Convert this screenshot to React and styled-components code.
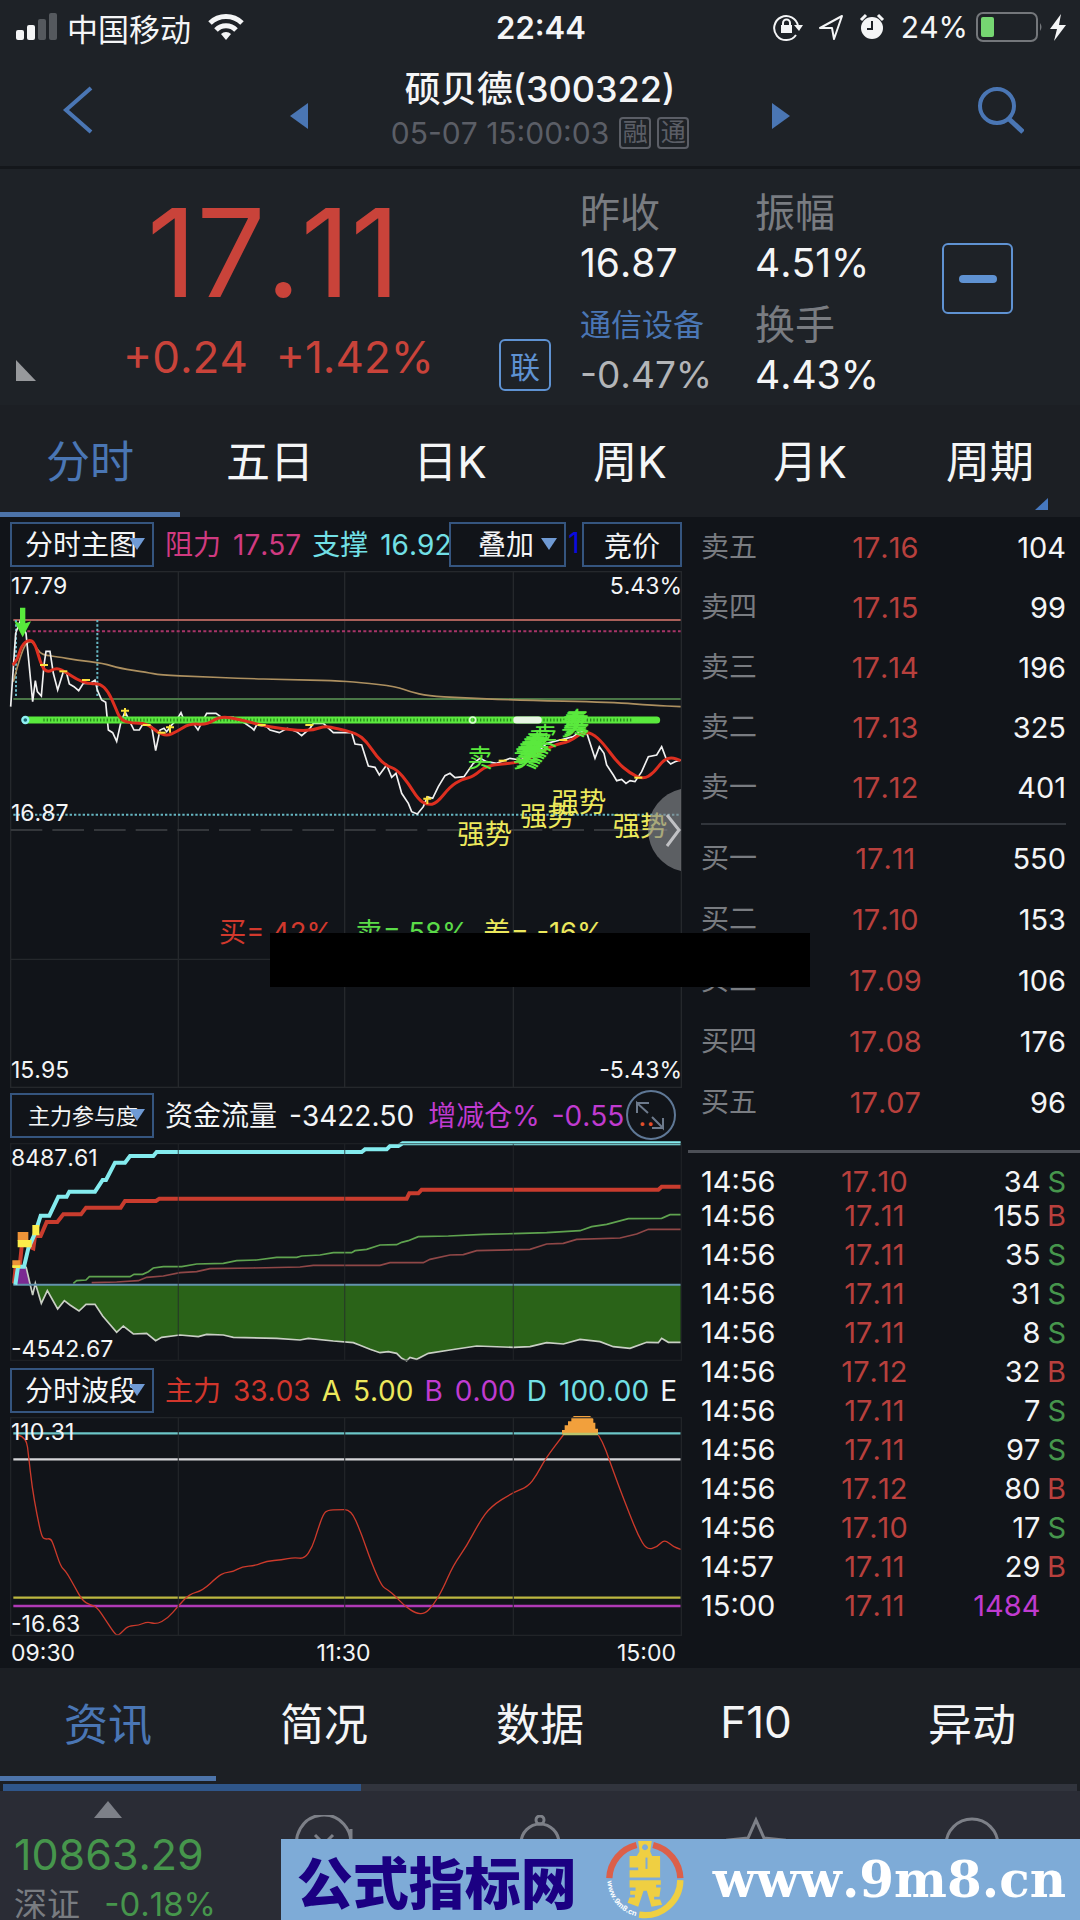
import React from 'react';
import styled, { createGlobalStyle, css } from 'styled-components';

const C_PAGE = '#111419';
const C_BAR = '#1e2227';
const C_TABS = '#1c1f24';
const C_FOOTER = '#2a2c35';
const C_WHITE = '#f4f5f6';
const C_GREY = '#797c81';
const C_BLUE = '#4a76b4';
const C_LIGHT_BLUE = '#5f92d2';
const C_RED = '#c9433a';
const C_DEEP_RED = '#b8403d';
const C_GREEN = '#46964c';
const C_MAGENTA = '#c03bd0';
const C_CYAN = '#72e0e6';
const C_YELLOW = '#ece85c';
const C_GRID = '#25282c';

const GlobalStyle = createGlobalStyle`
  * {
    box-sizing: border-box;
  }

  body {
    margin: 0;
    background: ${C_PAGE};
    color: ${C_WHITE};
    font-family: Inter, "Noto Sans CJK SC", sans-serif;
    font-kerning: none;
  }

  button,
  select {
    margin: 0;
    padding: 0;
    border: 0;
    background: none;
    color: inherit;
    font: inherit;
  }

  svg {
    display: block;
  }
`;

const Page = styled.div`
  min-height: 100vh;
  overflow: hidden;
`;

/* Status bar */

const StatusBar = styled.div`
  display: grid;
  grid-template-columns: 1fr auto 1fr;
  align-items: center;
  height: 54px;
  padding: 0 14px 0 16px;
  background: ${C_BAR};
  font-size: 30px;
`;

const StatusGroup = styled.div`
  display: flex;
  align-items: center;
  justify-content: ${({ end }) => (end ? 'flex-end' : 'flex-start')};
  gap: ${({ gap }) => gap}px;
`;

const Carrier = styled.span`
  font-size: 31px;
`;

const Clock = styled.time`
  font-size: 31px;
  font-weight: 600;
`;

/* Header */

const Header = styled.header`
  display: grid;
  grid-template-columns: 1fr auto 1fr;
  height: 115px;
  padding: 0 56px;
  background: ${C_BAR};
  border-bottom: 3px solid #14171b;
`;

const HeaderSide = styled.div`
  display: flex;
  justify-content: space-between;
  padding-top: 32px;
`;

const IconButton = styled.button`
  display: flex;
  align-items: ${({ low }) => (low ? 'center' : 'flex-start')};
  height: 60px;
  color: ${C_BLUE};
`;

const Heading = styled.div`
  display: flex;
  flex-direction: column;
  align-items: center;
  width: 464px;
  padding-top: 12px;
`;

const Name = styled.h1`
  margin: 0;
  font-size: 36px;
  font-weight: 500;
  line-height: 46px;
`;

const Stamp = styled.div`
  display: flex;
  align-items: center;
  gap: 6px;
  color: #5b5e66;
  font-size: 30px;
  line-height: 42px;
`;

const Tag = styled.span`
  width: 32px;
  height: 32px;
  border: 2px solid currentColor;
  border-radius: 4px;
  font-size: 25px;
  line-height: 27px;
  text-align: center;
  &:first-of-type {
    margin-left: 4px;
  }
`;

/* Quote */

const Quote = styled.section`
  display: grid;
  grid-template-columns: 499fr 81fr 175fr 187fr 138fr;
  height: 236px;
  background: ${C_BAR};
`;

const PriceBlock = styled.div`
  position: relative;
  display: flex;
  flex-direction: column;
  align-items: center;
  padding: 24px 0 0 58px;
  color: ${C_RED};
`;

const Price = styled.strong`
  font-size: 122px;
  font-weight: 400;
  line-height: 120px;
  padding-right: 10px;
`;

const Change = styled.div`
  display: flex;
  gap: 28px;
  font-size: 44px;
  line-height: 88px;
`;

const Corner = styled.svg`
  position: absolute;
  left: 16px;
  bottom: 24px;
`;

const BoxButton = styled.button`
  display: flex;
  align-items: center;
  justify-content: center;
  width: ${({ size }) => size}px;
  height: ${({ size }) => size}px;
  margin-top: ${({ top }) => top}px;
  border: 2px solid ${C_LIGHT_BLUE};
  border-radius: 6px;
  color: ${C_LIGHT_BLUE};
  font-size: 30px;
`;

const Figures = styled.dl`
  display: grid;
  grid-template-rows: 50px 50px 62px 50px;
  align-items: end;
  align-content: start;
  margin: 0;
  padding-top: 19px;
  line-height: 50px;
  white-space: nowrap;
`;

const Term = styled.dt`
  color: ${({ link }) => (link ? C_BLUE : C_GREY)};
  font-size: ${({ link }) => (link ? 31 : 40)}px;
`;

const Figure = styled.dd`
  margin: 0;
  color: ${({ muted }) => (muted ? '#b3b5b8' : C_WHITE)};
  font-size: ${({ muted }) => (muted ? 37 : 39)}px;
`;

/* Tabs */

const Tabs = styled.nav`
  display: flex;
  height: ${({ tall }) => (tall ? 113 : 112)}px;
  background: ${C_TABS};
`;

const Tab = styled.button`
  position: relative;
  flex: 1;
  border-bottom: 5px solid ${({ active }) => (active ? '#4d74aa' : 'transparent')};
  color: ${({ active }) => (active ? C_BLUE : C_WHITE)};
  font-size: 44px;
`;

const TabCorner = styled.svg`
  position: absolute;
  right: 32px;
  bottom: 2px;
`;

/* Market: charts on the left, order book on the right */

const Market = styled.main`
  position: relative;
  display: grid;
  grid-template-columns: 344fr 196fr;
  background: ${C_PAGE};
`;

const Charts = styled.div`
  min-width: 0;
  padding: 5px 6px 0 10px;
`;

const Toolbar = styled.div`
  position: relative;
  display: flex;
  align-items: stretch;
  height: 45px;
  margin-bottom: ${({ gap }) => gap}px;
  font-size: 28px;
`;

const toolBox = css`
  flex: none;
  border: 2px solid #35557f;
  background: ${C_PAGE};
`;

const Picker = styled.div`
  ${toolBox}
  position: relative;
  width: ${({ width }) => width}px;
`;

const PickerSelect = styled.select`
  width: 100%;
  height: 100%;
  padding-left: ${({ indent }) => indent}px;
  appearance: none;
  outline: none;
  font-size: ${({ small }) => (small ? 22 : 28)}px;
  white-space: nowrap;
`;

const Caret = styled.svg`
  position: absolute;
  top: 14px;
  right: 7px;
  pointer-events: none;
`;

const ToolButton = styled.button`
  ${toolBox}
  width: 100px;
`;

const Legend = styled.div`
  display: flex;
  flex: 1;
  align-items: center;
  gap: ${({ tight }) => (tight ? 11 : 14)}px;
  min-width: 0;
  overflow: hidden;
  padding-left: 11px;
  line-height: 42px;
  white-space: nowrap;
`;

const Entry = styled.span`
  display: flex;
  flex: none;
  align-items: baseline;
  gap: 12px;
  color: ${({ color }) => color};
`;

const Peek = styled.span`
  flex: none;
  width: 16px;
  color: #0a0ae0;
  line-height: 42px;
  text-align: center;
`;

const ExpandButton = styled.button`
  position: absolute;
  top: -3px;
  right: 6px;
`;

const Plot = styled.div`
  position: relative;
  margin-bottom: ${({ gap }) => gap || 0}px;

  > svg {
    width: 100%;
    height: auto;
    overflow: visible;
  }
`;

const Scale = styled.span`
  position: absolute;
  font-size: 23px;
  line-height: 30px;
  ${({ bottom }) => (bottom === undefined ? 'top: 0;' : `bottom: ${bottom}px;`)}
  ${({ right }) => (right ? 'right: 0;' : 'left: 1px;')}
`;

const MidScale = styled(Scale)`
  top: 44%;
`;

const NextButton = styled.button`
  position: absolute;
  top: 42%;
  right: 1px;
`;

const TimeAxis = styled.div`
  display: grid;
  grid-template-columns: 1fr auto 1fr;
  padding: 2px 6px 0 1px;
  font-size: 23px;
  line-height: 30px;
  span:last-child {
    text-align: right;
  }
`;

const Cover = styled.div`
  position: absolute;
  top: 416px;
  left: 25%;
  width: 50%;
  height: 54px;
  background: #000;
`;

const Book = styled.div`
  min-width: 0;
`;

const Side = styled.div`
  margin: 0 14px 0 13px;

  & + & {
    margin-top: 6px;
    padding-top: 3px;
    border-top: 2px solid #31353b;
  }
`;

const Levels = styled.table`
  width: calc(100% - ${({ inset }) => inset || 0}px);
  margin-left: ${({ inset }) => (inset ? 13 : 0)}px;
  border-collapse: collapse;
  table-layout: fixed;
  font-size: 29px;
  line-height: 29px;
`;

const Row = styled.tr`
  height: ${({ size }) => size}px;
`;

const Cell = styled.td`
  width: ${({ width }) => width};
  padding: 0;
  color: ${({ color }) => color || C_WHITE};
  text-align: ${({ align }) => align || 'left'};
`;

const Label = styled.th`
  width: 30%;
  padding: 0;
  color: ${C_GREY};
  font-size: 28px;
  font-weight: 400;
  text-align: left;
`;

const Trades = styled.div`
  margin-top: 17px;
  padding-top: 14px;
  border-top: 3px solid #4c4f56;
`;

/* Footer */

const Progress = styled.div`
  height: 10px;
  padding: 3px 3px 0;
  background: ${C_TABS};
`;

const ProgressTrack = styled.div`
  height: 7px;
  background: #31343d;

  &::before {
    content: '';
    display: block;
    width: calc(100% / 3);
    height: 7px;
    background: #2f568a;
  }
`;

const Footer = styled.footer`
  position: relative;
  display: grid;
  grid-template-columns: repeat(5, 1fr);
  height: 129px;
  overflow: hidden;
  background: ${C_FOOTER};
  color: #7d8088;
`;

const Index = styled.a`
  display: flex;
  flex-direction: column;
  padding: 10px 0 0 14px;
  color: ${C_GREEN};
  font-size: 43px;
  line-height: 72px;
  text-decoration: none;
  white-space: nowrap;

  svg {
    align-self: center;
    margin-right: 14px;
  }
`;

const IndexNote = styled.span`
  display: flex;
  justify-content: space-between;
  font-size: 33px;
  line-height: 28px;
`;

const Exchange = styled.span`
  color: ${C_GREY};
`;

const FooterButton = styled.button`
  display: flex;
  justify-content: center;
  padding-top: 24px;
`;

const Banner = styled.a`
  position: absolute;
  right: 0;
  bottom: 0;
  left: 26%;
  display: flex;
  align-items: center;
  justify-content: space-between;
  height: 81px;
  padding: 0 14px 0 16px;
  background: #7eabd7;
  color: #fff;
  text-decoration: none;
`;

const BannerName = styled.b`
  color: #1b0082;
  font-family: 'Noto Sans CJK SC', sans-serif;
  font-size: 56px;
  font-weight: 900;
  line-height: 72px;
`;

const BannerSite = styled.b`
  font-family: 'DejaVu Serif', serif;
  font-size: 50px;
  line-height: 68px;
`;

const PERIODS = ['分时', '五日', '日K', '周K', '月K', '周期'];
const SECTIONS = ['资讯', '简况', '数据', 'F10', '异动'];

const ASKS = [
  ['卖五', '17.16', 104],
  ['卖四', '17.15', 99],
  ['卖三', '17.14', 196],
  ['卖二', '17.13', 325],
  ['卖一', '17.12', 401],
];

const BIDS = [
  ['买一', '17.11', 550],
  ['买二', '17.10', 153],
  ['买三', '17.09', 106],
  ['买四', '17.08', 176],
  ['买五', '17.07', 96],
];

const TRADES = [
  ['14:56', '17.10', 34, 'S'],
  ['14:56', '17.11', 155, 'B'],
  ['14:56', '17.11', 35, 'S'],
  ['14:56', '17.11', 31, 'S'],
  ['14:56', '17.11', 8, 'S'],
  ['14:56', '17.12', 32, 'B'],
  ['14:56', '17.11', 7, 'S'],
  ['14:56', '17.11', 97, 'S'],
  ['14:56', '17.12', 80, 'B'],
  ['14:56', '17.10', 17, 'S'],
  ['14:57', '17.11', 29, 'B'],
  ['15:00', '17.11', 1484, ''],
];

const PRICE_LINE =
  '32,590 47,370 60,335 78,370 85,440 98,575 106,512 112,545 124,558 132,465 138,424 150,424 160,490 173,540 190,485 200,490 208,522 222,530 236,542 250,520 270,520 285,510 292,540 305,570 317,577 325,660 338,668 350,694 362,640 375,605 392,640 402,660 418,660 430,640 455,650 467,722 480,660 492,655 500,665 515,645 530,630 543,608 552,630 580,640 594,660 620,610 648,610 665,622 700,622 735,640 757,655 762,660 770,645 800,650 810,660 838,668 862,655 890,665 905,677 930,655 940,640 970,640 1000,668 1055,668 1065,702 1085,705 1105,768 1125,772 1138,795 1160,765 1175,802 1188,790 1205,850 1225,880 1235,905 1252,912 1270,890 1282,860 1298,865 1315,830 1335,797 1350,790 1365,803 1392,800 1420,760 1440,745 1460,755 1490,760 1530,745 1560,750 1610,730 1640,700 1680,690 1720,680 1745,660 1760,668 1785,745 1798,710 1812,730 1820,765 1840,795 1850,812 1865,808 1878,820 1890,812 1905,815 1925,785 1945,740 1970,735 1985,710 2000,750 2012,762 2025,755 2042,750';

const MEAN_LINE =
  '38,465 50,455 65,405 88,388 105,400 125,470 143,488 170,472 200,488 230,508 265,522 300,520 325,545 345,590 362,630 395,640 440,640 470,665 500,678 530,665 570,640 620,645 660,618 720,628 780,645 840,655 900,662 940,660 975,648 1010,655 1070,670 1100,695 1130,740 1160,768 1190,778 1225,820 1255,868 1282,885 1310,880 1350,830 1385,808 1420,800 1460,765 1540,760 1580,750 1660,705 1710,695 1745,668 1775,668 1810,700 1850,755 1890,790 1930,808 1960,790 1990,750 2015,742 2042,752';

const AVERAGE_LINE =
  '40,515 65,420 88,390 105,405 120,430 140,436 170,440 230,450 310,460 360,475 440,487 480,495 600,500 720,505 860,509 1000,512 1080,517 1190,530 1230,545 1285,558 1380,563 1540,570 1840,577 1960,586 2042,590';

const FLOW_LINE =
  '78,440 98,525 106,490 124,550 142,512 173,567 193,542 210,555 237,573 258,553 285,553 308,588 350,637 370,618 400,642 440,640 467,662 485,652 540,645 595,650 620,643 670,645 700,652 830,655 900,660 925,655 1000,663 1060,668 1080,676 1110,688 1140,698 1165,695 1190,700 1205,715 1220,722 1230,712 1250,718 1285,700 1350,690 1430,678 1540,682 1590,680 1640,668 1690,672 1740,658 1800,665 1840,680 1890,685 1940,667 1975,668 1985,655 2005,667 2042,667';

const WAVE_LEFT =
  '55,225 79,232 86,290 96,380 111,465 125,530 135,538 152,535 161,555 182,620 198,634 224,680 247,722 271,735 290,740 317,780 343,820 354,827 370,812 385,798 416,796 442,785 469,793 502,776 535,738 568,702 607,692 653,650 673,638 700,635 726,620 766,617 799,603 845,600 882,592 913,597 937,562 953,510 970,462 983,450 1016,449 1053,449 1082,515 1115,610 1146,680 1162,688 1188,710 1214,738 1247,760 1274,762 1300,735 1327,690 1360,615 1399,560 1439,485 1472,440 1538,398 1584,380 1610,345 1637,295 1690,225';

const WAVE_RIGHT =
  '1795,225 1808,245 1828,300 1855,375 1888,460 1914,525 1940,570 1973,560 1993,538 2020,560 2042,568';

const TICKS = [
  [132, 465], [190, 484], [258, 510], [440, 645], [485, 668],
  [785, 645], [928, 645], [1508, 752], [1690, 690], [1915, 803],
];
const CROSSES = [[375, 602], [510, 652], [1282, 866]];

const SELLS = [
  [1440, 770], [1576, 770], [1582, 764], [1588, 757], [1594, 750], [1600, 742],
  [1606, 734], [1612, 726], [1620, 716], [1635, 706], [1720, 674], [1725, 668],
  [1732, 660], [1729, 664],
];

const STRONG = [[1372, 1001], [1560, 948], [1655, 907], [1838, 978]];

// Rounds a polyline by running quadratic curves through the midpoints
const smooth = points => {
  const list = points.split(' ').map(pair => pair.split(',').map(Number));
  const [first] = list;
  const last = list[list.length - 1];
  const curves = list.slice(1, -1).map(([x, y], i) => {
    const [nextX, nextY] = list[i + 2];
    return `Q${x} ${y} ${(x + nextX) / 2} ${(y + nextY) / 2}`;
  });
  return `M${first.join(' ')}${curves.join('')}L${last.join(' ')}`;
};

// Plots are drawn at three units to the pixel
const Grid = ({ top, bottom, opacity = 1 }) => (
  <g stroke={C_GRID} strokeWidth="4" fill="none" opacity={opacity}>
    <rect x="32" y={top + 2} width="2012" height={bottom - top - 4} />
    <path d={`M535 ${top}V${bottom}M1034 ${top}V${bottom}M1540 ${top}V${bottom}`} />
  </g>
);

const PricePlot = () => (
  <svg viewBox="30 183 2016 1551" fill="none">
    <Grid top={183} bottom={1734} />
    <path d="M32 1348H2044" stroke={C_GRID} strokeWidth="4" />
    <path d="M32 960H2044" stroke="#34373b" strokeWidth="6" strokeDasharray="95 30" />
    <path d="M40 330H2042" stroke="#a9605a" strokeWidth="6" />
    <path d="M66 364H2042" stroke="#a83468" strokeWidth="6" strokeDasharray="9 7" />
    <path d="M40 914H2042" stroke="#66b6c2" strokeWidth="6" strokeDasharray="7 6" />
    <path d="M48 330V567M292 330V567" stroke="#66b6c2" strokeWidth="6" strokeDasharray="7 6" />
    <path d="M40 567H2042" stroke="#4a7747" strokeWidth="6" />
    <path d={smooth(AVERAGE_LINE)} stroke="#ad9060" strokeWidth="5" />
    <polyline points={PRICE_LINE} stroke="#f1f1f1" strokeWidth="5" />
    <path d="M78 630H1970" stroke="#5ae93d" strokeWidth="21" strokeLinecap="round" />
    <path d="M130 630H1900" stroke="#2c8a20" strokeWidth="9" strokeDasharray="4 6" />
    <path d="M1550 630H1615" stroke="#e8f5e4" strokeWidth="21" strokeLinecap="round" />
    <circle cx="1418" cy="630" r="9" stroke="#d9ffd2" strokeWidth="5" />
    <circle cx="76" cy="630" r="9" fill="#1c6a74" stroke="#8ff0f2" strokeWidth="7" />
    <path d={smooth(MEAN_LINE)} stroke="#de2f20" strokeWidth="9" />
    <g stroke="#fbe23c" strokeWidth="6">
      {TICKS.map(([x, y]) => (
        <path key={x} d={`M${x - 12} ${y}h24`} />
      ))}
      {CROSSES.map(([x, y]) => (
        <path key={x} d={`M${x - 12} ${y}h24M${x} ${y - 8}v24`} />
      ))}
    </g>
    <path d="M60 293H76V340L93 334L68 382L43 334L60 340Z" fill="#58ea3c" />
    <g fill="#5ae93d" fontSize="75" textAnchor="middle">
      {SELLS.map(([x, y]) => (
        <text key={x} x={x} y={y}>卖</text>
      ))}
    </g>
    <g fill={C_YELLOW} fontSize="82">
      {STRONG.map(([x, y]) => (
        <text key={x} x={x} y={y}>强势</text>
      ))}
    </g>
    <g fontSize="82">
      <text x="657" y="1297" fill="#d2392d">买= 42%</text>
      <text x="1066" y="1297" fill="#5bdc48">卖= 58%</text>
      <text x="1450" y="1297" fill={C_YELLOW}>差= -16%</text>
    </g>
  </svg>
);

const FlowPlot = () => (
  <svg viewBox="30 69 2016 654" fill="none">
    <path d={`M100 494L${FLOW_LINE.split(' ').slice(2).join('L')}V494Z`} fill="#2a6318" />
    <path d="M48 494L58 440H76L92 494Z" fill="#7b2a92" />
    <polyline points={FLOW_LINE} stroke="#c9cfc4" strokeWidth="5" />
    <path d="M40 494H2042" stroke="#6393ad" strokeWidth="6" />
    <polyline
      points="220,490 230,482 258,480 268,470 390,470 402,463 428,463 445,455 460,444 490,440 545,440 590,432 670,430 710,422 770,420 830,412 890,412 905,408 960,405 1000,398 1055,398 1065,392 1100,388 1140,375 1190,374 1205,367 1225,362 1255,350 1345,348 1450,343 1540,341 1640,338 1740,332 1775,320 1820,313 1885,296 1985,295 2010,284 2042,284"
      stroke="#5fa34f"
      strokeWidth="5"
    />
    <polyline
      points="275,488 350,486 415,482 440,472 490,468 540,458 590,455 630,446 760,444 900,441 940,436 1140,436 1170,428 1270,428 1290,418 1350,405 1390,404 1430,392 1590,388 1640,372 1690,370 1730,358 1860,354 1910,342 1945,328 2042,328"
      stroke="#8f4747"
      strokeWidth="5"
    />
    <polyline
      points="42,490 48,430 60,430 66,370 100,385 105,348 122,348 140,306 172,306 190,283 243,283 258,263 362,263 375,243 468,243 478,236 1220,236 1228,220 1255,220 1265,209 1975,209 1985,200 2042,200"
      stroke="#c93c2e"
      strokeWidth="12"
    />
    <polyline
      points="46,494 54,440 72,440 85,385 105,340 122,287 148,287 175,230 200,230 208,215 285,215 308,180 318,180 345,128 375,128 390,108 460,108 470,96 1085,96 1095,88 1160,88 1170,78 1195,78 1208,70 2042,70"
      stroke="#84ebee"
      strokeWidth="12"
    />
    <path d="M53 336h32v26h-32zM37 421h24v20h-24z" fill="#ee9438" />
    <path d="M53 360h42v22h-42zM37 436h24v8h-24zM97 315h21v31h-21z" fill="#fbec4a" />
    <Grid top={69} bottom={723} opacity={0.6} />
  </svg>
);

const WavePlot = () => (
  <svg viewBox="30 171 2016 657" fill="none">
    <path d="M40 220H2042" stroke="#6cc6c8" strokeWidth="7" />
    <path d="M40 298H2042" stroke="#d5d5d8" strokeWidth="7" />
    <path d="M40 713H2042" stroke="#bdb840" strokeWidth="7" />
    <path d="M40 738H2042" stroke="#b03ab6" strokeWidth="8" />
    <path d={smooth(WAVE_LEFT)} stroke="#cc3a2b" strokeWidth="4" />
    <path d={smooth(WAVE_RIGHT)} stroke="#cc3a2b" strokeWidth="4" />
    <path d="M1686 222V210H1694V196H1704V184H1714V174L1722 168H1770L1780 176V188H1786V206H1794V222Z" fill="#f2a03c" />
    <path d="M1688 222H1794" stroke="#b9c46c" strokeWidth="8" />
    <Grid top={171} bottom={828} opacity={0.8} />
  </svg>
);

const Dropdown = ({ label, width, indent, small }) => (
  <Picker width={width}>
    <PickerSelect aria-label={label} indent={indent} small={small} defaultValue={label}>
      <option>{label}</option>
    </PickerSelect>
    <Caret width="16" height="12" viewBox="0 0 16 12">
      <path d="M0 0h16l-8 12z" fill="#6f9ad4" />
    </Caret>
  </Picker>
);

const BookSide = ({ rows, size }) => (
  <Side>
    <Levels>
      <tbody>
        {rows.map(([label, price, volume]) => (
          <Row key={label} size={size}>
            <Label scope="row">{label}</Label>
            <Cell width="41%" align="center" color={C_DEEP_RED}>{price}</Cell>
            <Cell align="right">{volume}</Cell>
          </Row>
        ))}
      </tbody>
    </Levels>
  </Side>
);

const StatusIcons = () => (
  <>
    <svg width="30" height="30" viewBox="0 0 30 30" fill="none" stroke={C_WHITE} strokeWidth="2">
      <path d="M23 23a12 12 0 1 1 2-9" />
      <path d="M21 13h9l-4 6z" fill={C_WHITE} stroke="none" />
      <rect x="8" y="13" width="11" height="8" fill={C_WHITE} stroke="none" />
      <path d="M10 14v-3a3.500 3.500 0 0 1 7 0v3" />
    </svg>
    <svg width="24" height="26" viewBox="0 0 24 26" fill="none" stroke={C_WHITE} strokeWidth="2" strokeLinejoin="round">
      <path d="M1 14L23 2L15 25L13 14Z" />
    </svg>
    <svg width="26" height="28" viewBox="0 0 26 28" fill="none">
      <circle cx="13" cy="15" r="11" fill={C_WHITE} />
      <path d="M2 7l5-5M24 7l-5-5" stroke={C_WHITE} strokeWidth="3" />
      <path d="M13 8v8H8" stroke={C_BAR} strokeWidth="2" />
    </svg>
  </>
);

const Logo = () => (
  <svg width="78" height="79" viewBox="995 150 235 236" fill="none">
    <path d="M1005 264A107 107 0 0 1 1087 164M1137 164A107 107 0 0 1 1219 264" stroke="#dc5f49" strokeWidth="19" />
    <path d="M1219 270A107 107 0 0 1 1095 374" stroke="#efcf42" strokeWidth="19" />
    <path
      fillRule="evenodd"
      fill="#efcf42"
      d="M1092 152H1133L1128 184L1134 197H1158V262H1066V240H1092V232H1066V197H1088L1096 184ZM1112 162A9 9 0 1 0 1113 162ZM1066 270H1160V284H1146V292H1160L1156 320H1140V328H1158L1164 344L1132 350L1118 302H1108L1092 350L1060 338L1066 322H1082V314H1068V302H1084V292H1066Z"
    />
    <path d="M1117 202V236" stroke="#7eabd7" strokeWidth="6" />
    <path id="ring" d="M999 272A113 113 0 0 0 1096 380" />
    <text fill="#fff" fontSize="22" fontWeight="700">
      <textPath href="#ring">www.9m8.cn</textPath>
    </text>
  </svg>
);

const App = () => (
  <Page>
    <GlobalStyle />
    <StatusBar>
      <StatusGroup gap={9}>
        <svg width="42" height="28" viewBox="0 0 42 28" fill={C_WHITE}>
          <rect y="17" width="8" height="10" rx="2" />
          <rect x="11" y="12" width="8" height="15" rx="2" />
          <rect x="22" y="6" width="8" height="21" rx="2" fill="#55595e" />
          <rect x="33" width="8" height="27" rx="2" fill="#55595e" />
        </svg>
        <Carrier>中国移动</Carrier>
        <svg width="52" height="28" viewBox="-8 0 52 28" fill="none" stroke={C_WHITE} strokeWidth="5">
          <path d="M2 10a23 23 0 0 1 32 0M8 17a14 14 0 0 1 20 0" />
          <path d="M18 27l-5-6a7 7 0 0 1 10 0z" fill={C_WHITE} stroke="none" />
        </svg>
      </StatusGroup>
      <Clock>22:44</Clock>
      <StatusGroup end gap={16}>
        <StatusIcons />
        <StatusGroup gap={8}>
          <span>24%</span>
          <svg width="90" height="30" viewBox="0 0 90 30" fill="none">
            <rect x="1" y="1" width="60" height="28" rx="6" stroke="#74777b" strokeWidth="2" />
            <rect x="5" y="5" width="13" height="20" rx="2" fill="#76d672" />
            <path d="M64 11q3 4 0 8z" fill="#74777b" />
            <path d="M85 2L74 17h7l-3 12 12-16h-7z" fill={C_WHITE} />
          </svg>
        </StatusGroup>
      </StatusGroup>
    </StatusBar>

    <Header>
      <HeaderSide>
        <IconButton aria-label="返回">
          <svg width="38" height="48" viewBox="0 0 38 48" fill="none" stroke="currentColor" strokeWidth="4">
            <path d="M35 2L10 24l25 22" />
          </svg>
        </IconButton>
        <IconButton low aria-label="上一只">
          <svg width="18" height="26" viewBox="0 0 18 26" fill="currentColor">
            <path d="M18 0v26L0 13z" />
          </svg>
        </IconButton>
      </HeaderSide>
      <Heading>
        <Name>硕贝德(300322)</Name>
        <Stamp>
          <time>05-07 15:00:03</time>
          <Tag>融</Tag>
          <Tag>通</Tag>
        </Stamp>
      </Heading>
      <HeaderSide>
        <IconButton low aria-label="下一只">
          <svg width="18" height="26" viewBox="0 0 18 26" fill="currentColor">
            <path d="M0 0v26l18-13z" />
          </svg>
        </IconButton>
        <IconButton aria-label="搜索">
          <svg width="48" height="48" viewBox="0 0 48 48" fill="none" stroke="currentColor" strokeWidth="4">
            <circle cx="21" cy="20" r="17" />
            <path d="M33 33l14 13" strokeWidth="5" />
          </svg>
        </IconButton>
      </HeaderSide>
    </Header>

    <Quote>
      <PriceBlock>
        <Price>17.11</Price>
        <Change>
          <span>+0.24</span>
          <span>+1.42%</span>
        </Change>
        <Corner width="20" height="21" viewBox="0 0 20 21">
          <path d="M0 0l20 21H0z" fill="#97999c" />
        </Corner>
      </PriceBlock>
      <BoxButton size={52} top={170}>联</BoxButton>
      <Figures>
        <Term>昨收</Term>
        <Figure>16.87</Figure>
        <Term link>通信设备</Term>
        <Figure muted>-0.47%</Figure>
      </Figures>
      <Figures>
        <Term>振幅</Term>
        <Figure>4.51%</Figure>
        <Term>换手</Term>
        <Figure>4.43%</Figure>
      </Figures>
      <BoxButton size={71} top={74} aria-label="删除自选">
        <svg width="38" height="8" viewBox="0 0 38 8">
          <rect width="38" height="8" rx="4" fill="currentColor" />
        </svg>
      </BoxButton>
    </Quote>

    <Tabs>
      {PERIODS.map((period, i) => (
        <Tab key={period} active={i === 0}>
          {period}
          {period === '周期' && (
            <TabCorner width="13" height="12" viewBox="0 0 13 12">
              <path d="M13 0v12H0z" fill="#4678bf" />
            </TabCorner>
          )}
        </Tab>
      ))}
    </Tabs>

    <Market>
      <Charts>
        <Toolbar gap={4}>
          <Dropdown label="分时主图" width={144} indent={13} />
          <Legend tight>
            <Entry color="#d03a80"><span>阻力</span><span>17.57</span></Entry>
            <Entry color={C_CYAN}><span>支撑</span><span>16.92</span></Entry>
          </Legend>
          <Dropdown label="叠加" width={117} indent={27} />
          <Peek>1</Peek>
          <ToolButton>竞价</ToolButton>
        </Toolbar>
        <Plot gap={5}>
          <PricePlot />
          <Scale>17.79</Scale>
          <Scale right>5.43%</Scale>
          <MidScale>16.87</MidScale>
          <Scale bottom={3}>15.95</Scale>
          <Scale bottom={3} right>-5.43%</Scale>
          <NextButton aria-label="展开">
            <svg width="33" height="84" viewBox="0 0 33 84" fill="none">
              <path d="M33 1a42 42 0 0 0 0 82z" fill="#85878c" fillOpacity=".65" />
              <path d="M19 27l12 15-12 16" stroke="#c0c1c4" strokeWidth="3" />
            </svg>
          </NextButton>
        </Plot>

        <Toolbar gap={5}>
          <Dropdown label="主力参与度" width={144} indent={16} small />
          <Legend>
            <Entry color={C_WHITE}><span>资金流量</span><span>-3422.50</span></Entry>
            <Entry color={C_MAGENTA}><span>增减仓%</span><span>-0.55</span></Entry>
            <Entry color="#e0502c">..</Entry>
          </Legend>
          <ExpandButton aria-label="全屏">
            <svg width="50" height="50" viewBox="0 0 50 50" fill="none" strokeWidth="2">
              <circle cx="25" cy="25" r="24" stroke="#5f7896" />
              <path d="M22 23L11 13v10M11 13h12M26 27l11 11V28M37 38H26" stroke="#6d7a8c" />
            </svg>
          </ExpandButton>
        </Toolbar>
        <Plot gap={7}>
          <FlowPlot />
          <Scale>8487.61</Scale>
          <Scale bottom={-3}>-4542.67</Scale>
        </Plot>

        <Toolbar gap={4}>
          <Dropdown label="分时波段" width={144} indent={13} />
          <Legend tight>
            <Entry color="#d2362c"><span>主力</span><span>33.03</span></Entry>
            <Entry color={C_YELLOW}><span>A</span><span>5.00</span></Entry>
            <Entry color={C_MAGENTA}><span>B</span><span>0.00</span></Entry>
            <Entry color={C_CYAN}><span>D</span><span>100.00</span></Entry>
            <Entry color={C_WHITE}>E</Entry>
          </Legend>
        </Toolbar>
        <Plot>
          <WavePlot />
          <Scale>110.31</Scale>
          <Scale bottom={-3}>-16.63</Scale>
        </Plot>
        <TimeAxis>
          <span>09:30</span>
          <span>11:30</span>
          <span>15:00</span>
        </TimeAxis>
      </Charts>

      <Book>
        <BookSide rows={ASKS} size={60} />
        <BookSide rows={BIDS} size={61} />
        <Trades>
          <Levels inset={27}>
            <tbody>
              {TRADES.map(([time, price, volume, side], i) => (
                <Row key={`${time}-${volume}`} size={i === 0 ? 29 : 39}>
                  <Cell width="25%">{time}</Cell>
                  <Cell width="45%" align="center" color={C_DEEP_RED}>{price}</Cell>
                  <Cell align="right" color={side ? C_WHITE : C_MAGENTA}>{volume}</Cell>
                  <Cell width="7%" align="right" color={side === 'S' ? C_GREEN : C_DEEP_RED}>{side}</Cell>
                </Row>
              ))}
            </tbody>
          </Levels>
        </Trades>
      </Book>
      <Cover />
    </Market>

    <Tabs tall>
      {SECTIONS.map((section, i) => (
        <Tab key={section} active={i === 0}>{section}</Tab>
      ))}
    </Tabs>
    <Progress>
      <ProgressTrack />
    </Progress>

    <Footer>
      <Index href="#index">
        <svg width="28" height="17" viewBox="0 0 28 17">
          <path d="M14 0l14 17H0z" fill="#7d8088" />
        </svg>
        <span>10863.29</span>
        <IndexNote>
          <Exchange>深证</Exchange>
          <span>-0.18%</span>
        </IndexNote>
      </Index>
      <FooterButton aria-label="交易">
        <svg width="60" height="60" viewBox="0 0 60 60" fill="none" stroke="currentColor" strokeWidth="3">
          <path d="M5 38a27 27 0 1 1 51-5M57 14v20M21 20l9 9 9-9" />
        </svg>
      </FooterButton>
      <FooterButton aria-label="预警">
        <svg width="60" height="60" viewBox="0 0 60 60" fill="none" stroke="currentColor" strokeWidth="3">
          <circle cx="30" cy="5" r="4" />
          <path d="M11 50V28a19 19 0 0 1 38 0v22" />
        </svg>
      </FooterButton>
      <FooterButton aria-label="自选">
        <svg width="60" height="60" viewBox="0 0 60 60" fill="none" stroke="currentColor" strokeWidth="3">
          <path d="M30 5l8 18 20 2-15 14 4 20-17-10-17 10 4-20L2 25l20-2z" />
        </svg>
      </FooterButton>
      <FooterButton aria-label="更多">
        <svg width="60" height="60" viewBox="0 0 60 60" fill="none" stroke="currentColor" strokeWidth="3">
          <circle cx="30" cy="30" r="26" />
        </svg>
      </FooterButton>
      <Banner href="#site">
        <BannerName>公式指标网</BannerName>
        <Logo />
        <BannerSite>www.9m8.cn</BannerSite>
      </Banner>
    </Footer>
  </Page>
);

export default App;
